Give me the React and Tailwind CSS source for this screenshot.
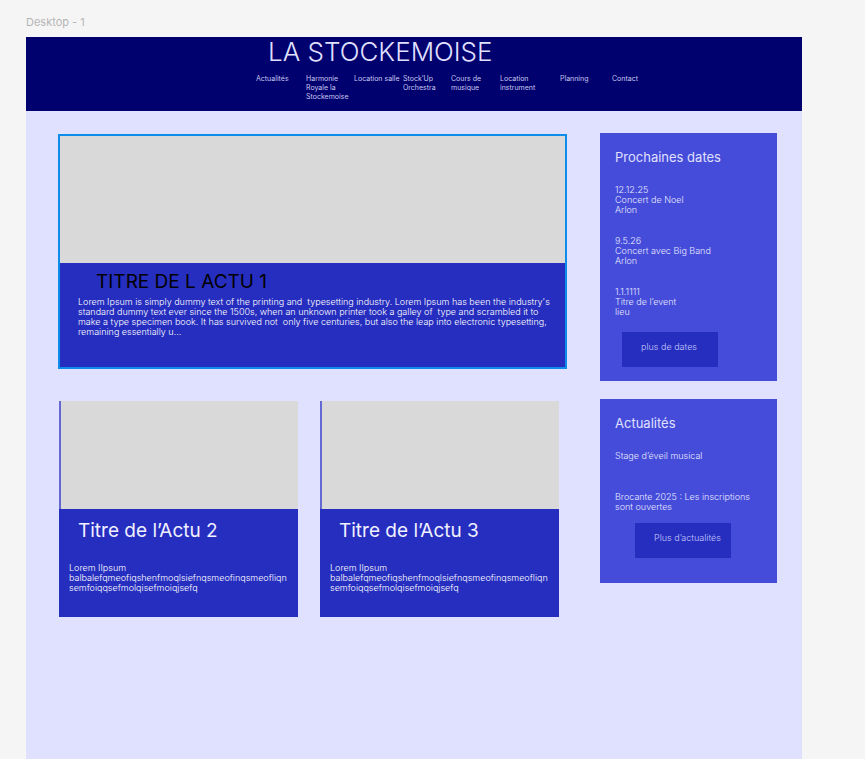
const navItems = [
  { label: 'Actualités', size: 'w-[50px]' },
  { label: 'Harmonie Royale la Stockemoise', size: 'w-[48px]' },
  { label: 'Location salle', size: 'w-[49px] whitespace-nowrap' },
  { label: 'Stock’Up Orchestra', size: 'w-[48px] pr-2' },
  { label: 'Cours de musique', size: 'w-[49px] pr-2' },
  { label: 'Location instrument', size: 'w-[60px] pr-4' },
  { label: 'Planning', size: 'w-[52px]' },
  { label: 'Contact', size: 'w-[52px]' },
];

const dates = [
  ['12.12.25', 'Concert de Noel', 'Arlon'],
  ['9.5.26', 'Concert avec Big Band', 'Arlon'],
  ['1.1.1111', 'Titre de l’event', 'lieu'],
];

const leadText = `Lorem Ipsum is simply dummy text of the printing and  typesetting industry. Lorem Ipsum has been the industry's
standard dummy text ever since the 1500s, when an unknown printer took a galley of  type and scrambled it to
make a type specimen book. It has survived not  only five centuries, but also the leap into electronic typesetting,
remaining essentially u...`;

function NewsCard({ title }) {
  return (
    <article className="min-w-0 bg-[#262ebf]">
      <div className="h-[108px] border-l-2 border-[#6468d2] bg-[#d9d9d9]" />
      <div className="h-[108px] pt-2.5 pl-2.5">
        <h2 className="pl-[9px] text-[19px] leading-6 text-[#f0f0ff]">{title}</h2>
        <p className="mt-5 text-[9px] leading-[10px] font-light text-white">
          Lorem IIpsum
          <br />
          balbalefqmeofiqshenfmoqlsiefnqsmeofinqsmeofliqn
          <br />
          semfoiqqsefmolqisefmoiqjsefq
        </p>
      </div>
    </article>
  );
}

function PanelButton({ children, className }) {
  return (
    <button
      type="button"
      className={`flex h-[35px] w-24 items-start bg-[#262ebf] pt-2.5 pl-[19px] text-[9px] leading-[10px] font-light whitespace-nowrap text-[#c4c6fa] ${className}`}
    >
      {children}
    </button>
  );
}

export default function App() {
  return (
    <div className="flex min-h-screen flex-col bg-[#f5f5f5] pr-[63px] pl-[26px] font-['Inter',sans-serif]">
      <p className="pt-4 pb-2 text-[11px] leading-[13px] text-[#b5b5b5]">Desktop - 1</p>
      <div className="flex flex-1 flex-col bg-[#e0e0ff]">
        <header className="h-[74px] bg-[#00006e] pl-[230px] text-[#e0e0ff]">
          <h1 className="pl-3 text-[26px] leading-[30px] font-light whitespace-nowrap">LA STOCKEMOISE</h1>
          <nav className="mt-[7px] flex text-[7px] leading-[9px] text-[#c9c9f0]">
            {navItems.map((item) => (
              <a key={item.label} href="#" className={`shrink-0 ${item.size}`}>
                {item.label}
              </a>
            ))}
          </nav>
        </header>
        <div className="flex items-start gap-[33px] pt-[22px] pr-[25px] pl-8">
          <main className="min-w-0 flex-1 pt-px">
            <article className="border-2 border-[#0d8cea] bg-[#262ebf]">
              <div className="h-[127px] bg-[#d9d9d9]" />
              <div className="h-[104px] pt-[7px] pl-[18px]">
                <h2 className="pl-[18px] text-[19px] leading-6 text-black">TITRE DE L ACTU 1</h2>
                <p className="mt-[3px] text-[9px] leading-[10px] font-light whitespace-pre text-white">{leadText}</p>
              </div>
            </article>
            <div className="mt-8 mr-2 ml-px grid grid-cols-2 gap-[22px]">
              <NewsCard title="Titre de l’Actu 2" />
              <NewsCard title="Titre de l’Actu 3" />
            </div>
          </main>
          <aside className="flex w-[177px] shrink-0 flex-col gap-[18px] text-[9px] leading-[10px] font-light text-[#e8e8ff]">
            <section className="h-[248px] bg-[#444cd9] px-[15px] pt-4">
              <h2 className="text-[13px] leading-4 font-normal text-[#e0e0ff]">Prochaines dates</h2>
              <ul className="mt-5 flex flex-col gap-[21px]">
                {dates.map(([date, title, place]) => (
                  <li key={date}>
                    <p>{date}</p>
                    <p>{title}</p>
                    <p>{place}</p>
                  </li>
                ))}
              </ul>
              <PanelButton className="mt-[15px] ml-[7px]">plus de dates</PanelButton>
            </section>
            <section className="h-[184px] bg-[#444cd9] px-[15px] pt-4">
              <h2 className="text-[13px] leading-4 font-normal text-[#e0e0ff]">Actualités</h2>
              <ul className="mt-5 flex flex-col gap-[31px]">
                <li>Stage d’éveil musical</li>
                <li>
                  Brocante 2025 : Les inscriptions
                  <br />
                  sont ouvertes
                </li>
              </ul>
              <PanelButton className="mt-[11px] ml-5">Plus d’actualités</PanelButton>
            </section>
          </aside>
        </div>
      </div>
    </div>
  );
}
